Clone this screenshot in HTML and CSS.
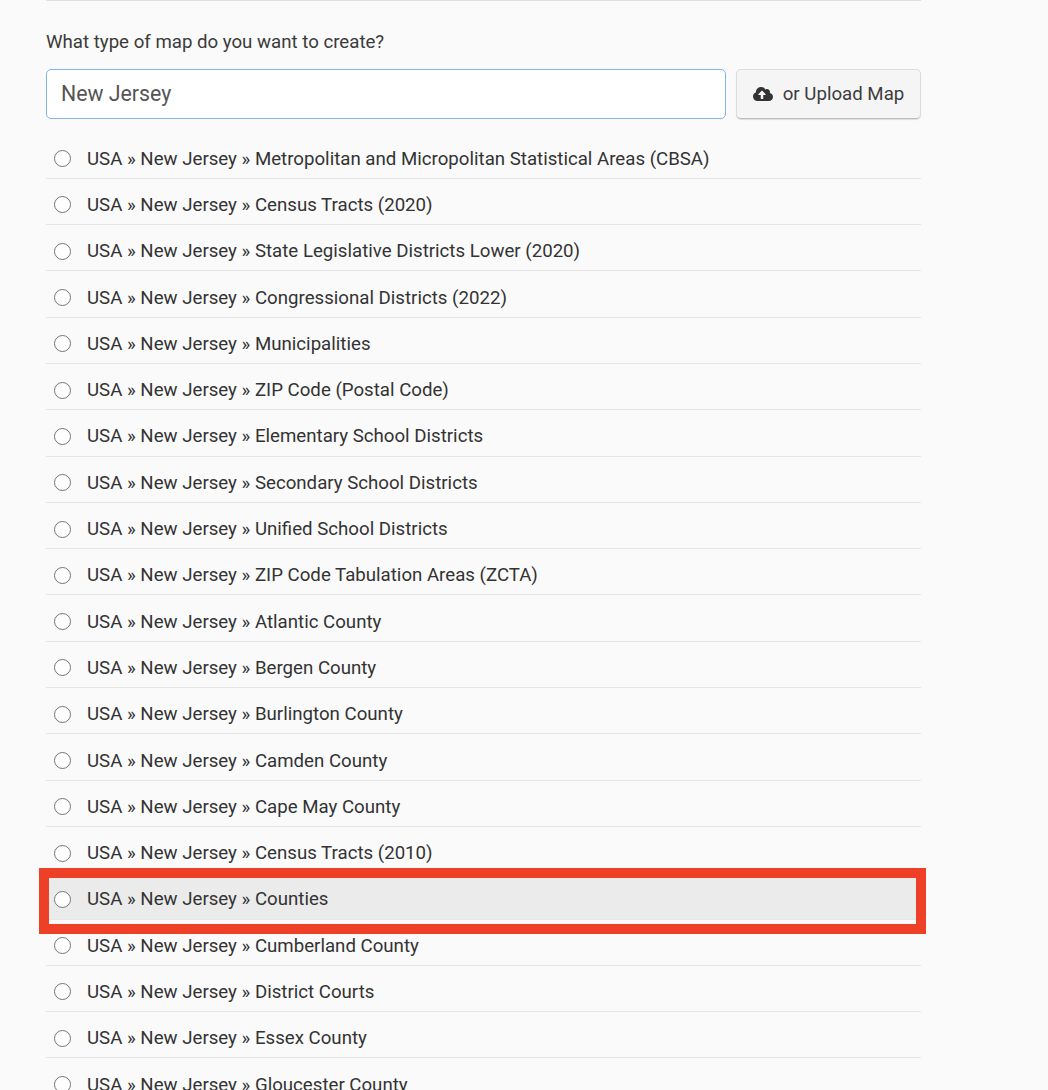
FILE: index.html
```html
<!DOCTYPE html>
<html lang="en">
<head>
<meta charset="utf-8">
<title>Create map</title>
<link rel="stylesheet" href="styles.css">
</head>
<body>
<main class="panel">
  <p class="question">What type of map do you want to create?</p>
  <div class="search-row">
    <input class="search" type="text" value="New Jersey">
    <button class="upload" type="button">
      <svg class="cloud" viewBox="0 0 640 512" aria-hidden="true"><path fill="currentColor" d="M537.6 226.6c4.1-10.7 6.4-22.4 6.4-34.6 0-53-43-96-96-96-19.7 0-38.1 6-53.3 16.2C367 64.2 315.3 32 256 32c-88.4 0-160 71.6-160 160 0 2.7.1 5.4.2 8.1C40.2 219.8 0 273.2 0 336c0 79.5 64.5 144 144 144h368c70.7 0 128-57.3 128-128 0-61.9-44-113.6-102.4-125.4zM393.4 288H328v112c0 8.8-7.2 16-16 16h-48c-8.8 0-16-7.2-16-16V288h-65.4c-14.3 0-21.4-17.2-11.3-27.3l105.4-105.4c6.2-6.2 16.4-6.2 22.6 0l105.4 105.4c10.1 10.1 2.9 27.3-11.3 27.3z"/></svg>
      <span>or Upload Map</span>
    </button>
  </div>
  <ul class="options">
    <li class="option"><span class="radio"></span>USA » New Jersey » Metropolitan and Micropolitan Statistical Areas (CBSA)</li>
    <li class="option"><span class="radio"></span>USA » New Jersey » Census Tracts (2020)</li>
    <li class="option"><span class="radio"></span>USA » New Jersey » State Legislative Districts Lower (2020)</li>
    <li class="option"><span class="radio"></span>USA » New Jersey » Congressional Districts (2022)</li>
    <li class="option"><span class="radio"></span>USA » New Jersey » Municipalities</li>
    <li class="option"><span class="radio"></span>USA » New Jersey » ZIP Code (Postal Code)</li>
    <li class="option"><span class="radio"></span>USA » New Jersey » Elementary School Districts</li>
    <li class="option"><span class="radio"></span>USA » New Jersey » Secondary School Districts</li>
    <li class="option"><span class="radio"></span>USA » New Jersey » Unified School Districts</li>
    <li class="option"><span class="radio"></span>USA » New Jersey » ZIP Code Tabulation Areas (ZCTA)</li>
    <li class="option"><span class="radio"></span>USA » New Jersey » Atlantic County</li>
    <li class="option"><span class="radio"></span>USA » New Jersey » Bergen County</li>
    <li class="option"><span class="radio"></span>USA » New Jersey » Burlington County</li>
    <li class="option"><span class="radio"></span>USA » New Jersey » Camden County</li>
    <li class="option"><span class="radio"></span>USA » New Jersey » Cape May County</li>
    <li class="option"><span class="radio"></span>USA » New Jersey » Census Tracts (2010)</li>
    <li class="option option-hover"><span class="radio"></span>USA » New Jersey » Counties<span class="callout"></span></li>
    <li class="option"><span class="radio"></span>USA » New Jersey » Cumberland County</li>
    <li class="option"><span class="radio"></span>USA » New Jersey » District Courts</li>
    <li class="option"><span class="radio"></span>USA » New Jersey » Essex County</li>
    <li class="option"><span class="radio"></span>USA » New Jersey » Gloucester County</li>
  </ul>
</main>
</body>
</html>
```
FILE: styles.css
```css
* { box-sizing: border-box; }
html, body { margin: 0; height: 1090px; overflow: hidden; background: #fafafa; }
body { font-family: Roboto, "Liberation Sans", sans-serif; color: #333; }
.panel {
  width: 875px;
  margin-left: 46px;
  border-top: 1px solid #e0e0e0;
  padding-top: 31px;
}
.question { margin: 0 0 17px; font-size: 18.67px; line-height: 20px; color: #3b3b3b; }
.search-row { display: flex; gap: 10px; height: 50px; }
.search {
  flex: 1;
  min-width: 0;
  height: 50px;
  padding: 0 14px 2px;
  border: 1px solid #7db5ec;
  border-radius: 5px;
  background: #fff;
  outline: none;
  font: 21.3px Roboto, sans-serif;
  color: #555;
}
.upload {
  width: 185px;
  height: 50px;
  display: flex;
  align-items: center;
  justify-content: center;
  gap: 10px;
  padding: 0 0 1px;
  border: 1px solid #dcdcdc;
  border-bottom-color: #bdbdbd;
  border-radius: 5px;
  background: #f5f5f5;
  box-shadow: 0 1px 1px rgba(0, 0, 0, .12);
  font: 18.67px Roboto, sans-serif;
  color: #3c3c3c;
}
.cloud { width: 20px; height: 16px; color: #333; }
.options { list-style: none; margin: 13.5px 0 0; padding: 0; }
.option {
  position: relative;
  display: flex;
  align-items: center;
  height: 46.31px;
  padding: 7px 0 0 8px;
  border-bottom: 1px solid #e6e6e6;
  font-size: 18.67px;
  color: #333;
  white-space: nowrap;
}
.radio {
  flex: none;
  width: 17px;
  height: 17px;
  margin-right: 16px;
  border: 1.5px solid #767676;
  border-radius: 50%;
  background: #fff;
}
.option-hover { background: #ebebeb; }
.callout {
  position: absolute;
  left: -7px;
  right: -5px;
  top: -5.5px;
  height: 66px;
  border: 10px solid #ee4026;
  pointer-events: none;
}
```
